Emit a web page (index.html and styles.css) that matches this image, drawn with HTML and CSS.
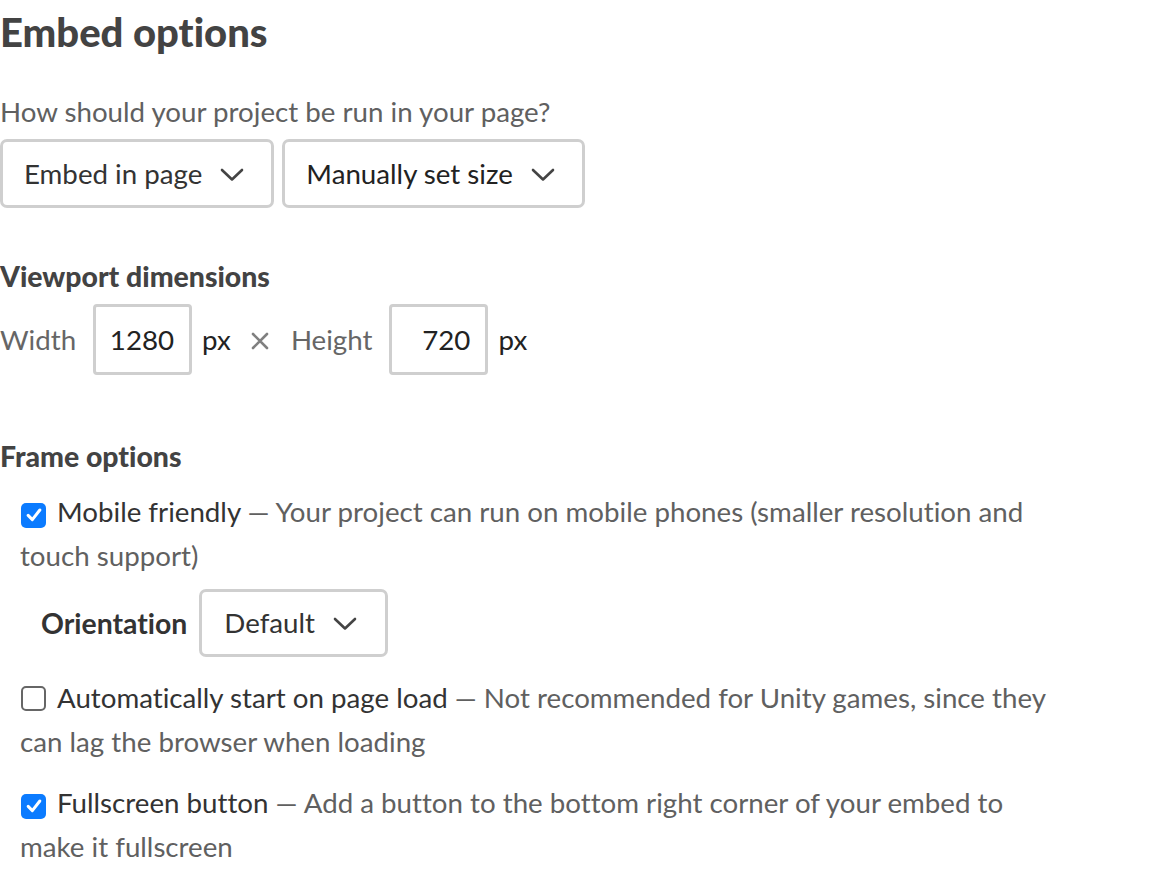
FILE: index.html
```html
<!DOCTYPE html>
<html lang="en">
<head>
<meta charset="utf-8">
<title>Embed options</title>
<link rel="stylesheet" href="styles.css">
</head>
<body>
<div class="embed">
  <h2 class="title">Embed options</h2>
  <p class="question">How should your project be run in your page?</p>
  <div class="select-row">
    <div class="select select-embed"><span class="select-text">Embed in page</span><svg class="chev" viewBox="0 0 24 14" width="24" height="14"><path d="M2 2 L12 11.5 L22 2" fill="none" stroke="#444" stroke-width="2.6" stroke-linecap="round" stroke-linejoin="round"/></svg></div>
    <div class="select select-size"><span class="select-text dark">Manually set size</span><svg class="chev" viewBox="0 0 24 14" width="24" height="14"><path d="M2 2 L12 11.5 L22 2" fill="none" stroke="#444" stroke-width="2.6" stroke-linecap="round" stroke-linejoin="round"/></svg></div>
  </div>

  <h3 class="label viewport-label">Viewport dimensions</h3>
  <div class="dims">
    <span class="muted">Width</span>
    <span class="num-input">1280</span>
    <span class="unit">px</span>
    <span class="times" aria-label="times"><svg viewBox="0 0 20 20" width="20" height="20"><path d="M3 3 L17 17 M17 3 L3 17" fill="none" stroke="#808080" stroke-width="2.6" stroke-linecap="round"/></svg></span>
    <span class="muted">Height</span>
    <span class="num-input">720</span>
    <span class="unit">px</span>
  </div>

  <h3 class="label frame-label">Frame options</h3>
  <div class="option opt-mobile">
    <span class="check checked"><svg viewBox="0 0 24 24" width="20" height="20"><path d="M5 12.5 L10 17.5 L19 6" fill="none" stroke="#fff" stroke-width="3.6" stroke-linecap="round" stroke-linejoin="round"/></svg></span><span class="opt-name">Mobile friendly</span><span class="opt-desc"> — Your project can run on mobile phones (smaller resolution and touch support)</span>
  </div>
  <div class="orientation">
    <span class="orient-label">Orientation</span>
    <div class="select select-orient"><span class="select-text">Default</span><svg class="chev" viewBox="0 0 24 14" width="24" height="14"><path d="M2 2 L12 11.5 L22 2" fill="none" stroke="#444" stroke-width="2.6" stroke-linecap="round" stroke-linejoin="round"/></svg></div>
  </div>
  <div class="option opt-auto">
    <span class="check"></span><span class="opt-name">Automatically start on page load</span><span class="opt-desc"> — Not recommended for Unity games, since they can lag the browser when loading</span>
  </div>
  <div class="option opt-full">
    <span class="check checked"><svg viewBox="0 0 24 24" width="20" height="20"><path d="M5 12.5 L10 17.5 L19 6" fill="none" stroke="#fff" stroke-width="3.6" stroke-linecap="round" stroke-linejoin="round"/></svg></span><span class="opt-name">Fullscreen button</span><span class="opt-desc"> — Add a button to the bottom right corner of your embed to make it fullscreen</span>
  </div>
</div>
</body>
</html>
```

FILE: styles.css
```css
html, body {
  margin: 0;
  padding: 0;
  background: #fff;
}

body {
  font-family: Lato, "Noto Sans", "Liberation Sans", sans-serif;
  font-size: 27.7px;
  color: #333;
  font-variant-ligatures: none;
}

.embed {
  width: 1060px;
}

.title {
  margin: 8px 0 0;
  font-size: 40px;
  line-height: 48px;
  font-weight: 900;
  color: #434343;
}

.question {
  margin: 38px 0 0;
  line-height: 36px;
  color: #606060;
}

.select-row {
  margin-top: 9px;
  display: flex;
  gap: 8px;
}

.select {
  box-sizing: border-box;
  height: 69px;
  border: 3px solid #cfcfcf;
  border-radius: 7px;
  display: inline-flex;
  align-items: center;
  padding: 0 27px 0 21px;
  gap: 18px;
  background: #fff;
}

.select-text {
  color: #333;
  line-height: 36px;
}

.select-text.dark {
  color: #222;
}

.chev {
  display: block;
  flex: none;
  margin-top: 2px;
}

.label {
  margin: 0;
  font-size: 28.4px;
  line-height: 36px;
  font-weight: 900;
  color: #434343;
}

.viewport-label {
  margin-top: 50px;
}

.dims {
  margin-top: 10px;
  display: flex;
  align-items: center;
  height: 71px;
}

.muted {
  color: #666;
}

.num-input {
  box-sizing: border-box;
  width: 99px;
  height: 71px;
  border: 3px solid #cfcfcf;
  border-radius: 4px;
  display: flex;
  align-items: center;
  justify-content: flex-end;
  padding-right: 15px;
  color: #222;
  margin: 0 10px 0 17px;
}

.unit {
  color: #222;
}

.times {
  display: flex;
  align-items: center;
  margin: 2px 21px 0 19px;
}

.times svg {
  display: block;
}

.frame-label {
  margin-top: 63px;
}

.option {
  padding-left: 20px;
  line-height: 44px;
}

.opt-mobile {
  margin-top: 16px;
}

.opt-auto {
  margin-top: 19px;
}

.opt-full {
  margin-top: 17px;
}

.check {
  box-sizing: border-box;
  display: inline-flex;
  align-items: center;
  justify-content: center;
  width: 25px;
  height: 25px;
  border: 2.5px solid #666;
  border-radius: 5px;
  vertical-align: -3px;
  margin: 0 11px 0 1px;
  background: #fff;
}

.check.checked {
  border: none;
  background: #0b7bff;
}

.check svg {
  display: block;
}

.opt-name {
  color: #333;
}

.opt-desc {
  color: #606060;
}

.orientation {
  margin-top: 11px;
  display: flex;
  align-items: center;
  padding-left: 41px;
}

.orient-label {
  font-size: 28.4px;
  font-weight: 700;
  color: #333;
  margin-right: 12px;
}

.select-orient {
  height: 68px;
  padding-left: 22px;
  padding-right: 28px;
}
```
